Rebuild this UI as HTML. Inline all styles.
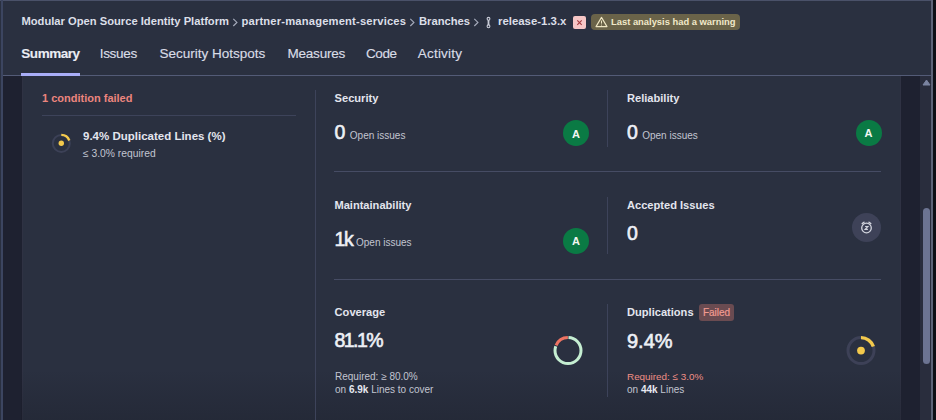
<!DOCTYPE html>
<html><head><meta charset="utf-8">
<style>
html,body{margin:0;padding:0;}
body{width:936px;height:420px;overflow:hidden;position:relative;background:#2a3040;font-family:"Liberation Sans",sans-serif;}
.a{position:absolute;white-space:nowrap;}
.t{position:absolute;white-space:nowrap;line-height:1;}
.bc{color:#dcdfe8;font-weight:700;font-size:11.2px;}
.chev{color:#a8adbd;font-size:12px;}
.tab{color:#d9dce6;font-size:13.5px;-webkit-text-stroke:0.15px #d9dce6;}
.ttl{color:#e3e5ee;font-weight:700;font-size:11.1px;}
.val{color:#eef0f6;font-size:19.5px;-webkit-text-stroke:0.6px #eef0f6;}
.sub{color:#c2c5d1;font-size:10px;}
.hl{background:#454b63;}
</style></head><body>
<!-- frame -->
<div class="a" style="left:0;top:0;width:936px;height:1px;background:#4a5169"></div>
<div class="a" style="left:1px;top:0;width:2px;height:420px;background:#3c4560"></div>
<div class="a" style="left:931px;top:0;width:2px;height:420px;background:#5d6478"></div>
<div class="a" style="left:933px;top:0;width:3px;height:420px;background:#0e1016"></div>

<!-- breadcrumb -->
<div class="t bc" style="left:21.4px;top:16px;">Modular Open Source Identity Platform</div>
<svg class="a" style="left:232.3px;top:17px" width="7" height="11" viewBox="0 0 7 11"><path d="M1.3 1.8L4.9 5.4L1.3 9" fill="none" stroke="#a4a9b9" stroke-width="1.2"/></svg>
<div class="t bc" style="left:241.5px;top:16px;letter-spacing:0.18px;">partner-management-services</div>
<svg class="a" style="left:409.3px;top:17px" width="7" height="11" viewBox="0 0 7 11"><path d="M1.3 1.8L4.9 5.4L1.3 9" fill="none" stroke="#a4a9b9" stroke-width="1.2"/></svg>
<div class="t bc" style="left:419px;top:16px;">Branches</div>
<svg class="a" style="left:472.8px;top:17px" width="7" height="11" viewBox="0 0 7 11"><path d="M1.3 1.8L4.9 5.4L1.3 9" fill="none" stroke="#a4a9b9" stroke-width="1.2"/></svg>
<svg class="a" style="left:484px;top:16px" width="9" height="13" viewBox="0 0 9 13">
  <circle cx="4.5" cy="2.8" r="1.4" fill="none" stroke="#c9ccd8" stroke-width="1.1"/>
  <circle cx="4.5" cy="10.3" r="1.4" fill="none" stroke="#c9ccd8" stroke-width="1.1"/>
  <line x1="4.5" y1="4.1" x2="4.5" y2="9" stroke="#c9ccd8" stroke-width="1.8"/>
</svg>
<div class="t bc" style="left:498px;top:16px;font-size:11.4px;">release-1.3.x</div>
<div class="a" style="left:573px;top:16px;width:13px;height:13px;background:#f6c6c6;border-radius:2px;"></div>
<svg class="a" style="left:573px;top:16px" width="13" height="13" viewBox="0 0 13 13"><path d="M4.3 4.4L8.7 8.8M8.7 4.4L4.3 8.8" stroke="#a33a3e" stroke-width="1.1"/></svg>
<div class="a" style="left:591px;top:13.5px;width:149px;height:16.8px;background:#6a6349;border-radius:4px;"></div>
<svg class="a" style="left:595px;top:16px" width="13" height="12" viewBox="0 0 13 12"><path d="M6.5 1.4L12 10.6H1Z" fill="none" stroke="#efe6c4" stroke-width="1.1" stroke-linejoin="round"/><path d="M6.5 4.6V7.6" stroke="#efe6c4" stroke-width="1"/><circle cx="6.5" cy="9" r="0.55" fill="#efe6c4"/></svg>
<div class="t" style="left:611px;top:17.3px;color:#f1e9c9;font-weight:700;font-size:9.4px;">Last analysis had a warning</div>

<!-- tabs -->
<div class="t tab" style="left:21.3px;top:47.1px;font-weight:700;color:#eceef4;letter-spacing:-0.45px;">Summary</div>
<div class="t tab" style="left:99.7px;top:47.1px;letter-spacing:-0.3px;">Issues</div>
<div class="t tab" style="left:159.4px;top:47.1px;">Security Hotspots</div>
<div class="t tab" style="left:287.5px;top:47.1px;letter-spacing:-0.22px;">Measures</div>
<div class="t tab" style="left:365.9px;top:47.1px;letter-spacing:-0.35px;">Code</div>
<div class="t tab" style="left:417.8px;top:47.1px;letter-spacing:0.2px;">Activity</div>
<div class="a" style="left:3px;top:75px;width:928px;height:1px;background:#535b77"></div>
<div class="a" style="left:21px;top:73.4px;width:59px;height:2.6px;background:#a9aef8"></div>

<!-- side strips -->
<div class="a" style="left:3px;top:76px;width:19px;height:344px;background:#1e2130"></div><div class="a" style="left:22px;top:76px;width:1px;height:344px;background:#2f3243"></div>
<div class="a" style="left:900px;top:76px;width:1px;height:344px;background:#2f3243"></div><div class="a" style="left:901px;top:76px;width:19px;height:344px;background:#1e2130"></div>
<div class="a" style="left:920px;top:76px;width:11px;height:344px;background:#292d3d"></div>
<svg class="a" style="left:922px;top:79px" width="9" height="7" viewBox="0 0 9 7"><path d="M4.5 1L8 6H1Z" fill="#7b84a1" stroke="#7b84a1" stroke-width="1" stroke-linejoin="round"/></svg>
<div class="a" style="left:923px;top:208px;width:7px;height:156px;background:#6c7492;border-radius:3.5px;"></div>
<!-- bottom fade -->
<div class="a" style="left:21px;top:370px;width:880px;height:50px;background:linear-gradient(to bottom,rgba(20,22,32,0),rgba(20,22,32,0.25));"></div>

<!-- left panel -->
<div class="t" style="left:42px;top:92.7px;color:#ec857e;font-weight:700;font-size:11px;">1 condition failed</div>
<div class="a" style="left:42px;top:115px;width:254px;height:1px;background:#3d435a"></div>
<svg class="a" style="left:50px;top:132px" width="23" height="23" viewBox="0 0 23 23">
  <circle cx="11.3" cy="11.4" r="8.5" fill="none" stroke="#3c4157" stroke-width="2"/>
  <path d="M11.3 2.9A8.5 8.5 0 0 1 19.29 8.49" fill="none" stroke="#f3c94c" stroke-width="2.4"/>
  <circle cx="11.3" cy="11.3" r="2.7" fill="#f3c94c"/>
</svg>
<div class="t" style="left:83px;top:130.8px;color:#e3e5ee;font-weight:700;font-size:11.5px;">9.4% Duplicated Lines (%)</div>
<div class="t" style="left:83px;top:149px;color:#c2c5d1;font-size:10.3px;">≤ 3.0% required</div>

<div class="a" style="left:315px;top:90px;width:1px;height:330px;background:#3d435a"></div>

<!-- Security -->
<div class="t ttl" style="left:334.6px;top:92.7px;">Security</div>
<div class="t val" style="left:334.6px;top:122.7px;">0</div>
<div class="t sub" style="left:349.8px;top:131.2px;">Open issues</div>
<div class="a" style="left:563px;top:120px;width:26px;height:26px;border-radius:50%;background:#0a7a44;"></div>
<div class="t" style="left:563px;top:128.5px;width:26px;text-align:center;color:#f2f6f2;font-weight:700;font-size:11px;">A</div>
<div class="a" style="left:607px;top:90px;width:1px;height:57px;background:#3d435a"></div>

<!-- Reliability -->
<div class="t ttl" style="left:627px;top:92.9px;">Reliability</div>
<div class="t val" style="left:627px;top:122.7px;">0</div>
<div class="t sub" style="left:642.2px;top:131.2px;">Open issues</div>
<div class="a" style="left:855.5px;top:119.5px;width:26px;height:26px;border-radius:50%;background:#0a7a44;"></div>
<div class="t" style="left:855.5px;top:128px;width:26px;text-align:center;color:#f2f6f2;font-weight:700;font-size:11px;">A</div>

<div class="a" style="left:334px;top:171px;width:547px;height:1px;background:#464c64"></div>

<!-- Maintainability -->
<div class="t ttl" style="left:334.4px;top:199.9px;">Maintainability</div>
<div class="t val" style="left:334.6px;top:229.7px;letter-spacing:-1.4px;">1k</div>
<div class="t sub" style="left:356px;top:238.4px;">Open issues</div>
<div class="a" style="left:563px;top:227.5px;width:26px;height:26px;border-radius:50%;background:#0a7a44;"></div>
<div class="t" style="left:563px;top:236px;width:26px;text-align:center;color:#f2f6f2;font-weight:700;font-size:11px;">A</div>
<div class="a" style="left:607px;top:197px;width:1px;height:57px;background:#3d435a"></div>

<!-- Accepted -->
<div class="t ttl" style="left:627px;top:200.0px;">Accepted Issues</div>
<div class="t val" style="left:627px;top:223.9px;">0</div>
<div class="a" style="left:852px;top:213px;width:29px;height:29px;border-radius:50%;background:#3e4258;"></div>
<svg class="a" style="left:858px;top:219px" width="17" height="17" viewBox="0 0 17 17">
  <circle cx="8.5" cy="9" r="4.8" fill="none" stroke="#d2d4de" stroke-width="1.3"/>
  <path d="M4.2 4.6L6 3.2M12.8 4.6L11 3.2" stroke="#d2d4de" stroke-width="1.4" stroke-linecap="round"/>
  <path d="M7.1 7.5H9.9L7.1 10.4H9.9" fill="none" stroke="#d2d4de" stroke-width="1.15"/>
</svg>

<div class="a" style="left:334px;top:279px;width:547px;height:1px;background:#464c64"></div>

<!-- Coverage -->
<div class="t ttl" style="left:334.6px;top:307.0px;">Coverage</div>
<div class="t val" style="left:334.6px;top:330.6px;letter-spacing:-1.6px;">81.1%</div>
<div class="t sub" style="left:335px;top:372.2px;">Required: ≥ 80.0%</div>
<div class="t sub" style="left:335px;top:384.8px;">on <b style="color:#e6e8f0">6.9k</b> Lines to cover</div>
<svg class="a" style="left:552px;top:335px" width="32" height="32" viewBox="0 0 32 32">
  <circle cx="16" cy="15.6" r="13" fill="none" stroke="#c5eed2" stroke-width="3" stroke-dasharray="64.8 16.9" stroke-dashoffset="-0.5" transform="rotate(-90 16 15.6)"/>
  <circle cx="16" cy="15.6" r="13" fill="none" stroke="#ee7362" stroke-width="3" stroke-dasharray="14.8 66.88" stroke-dashoffset="-66.2" transform="rotate(-90 16 15.6)"/>
</svg>
<div class="a" style="left:607px;top:304px;width:1px;height:93px;background:#3d435a"></div>

<!-- Duplications -->
<div class="t ttl" style="left:627px;top:307.2px;">Duplications</div>
<div class="a" style="left:699px;top:304px;width:35px;height:17px;border-radius:3px;background:#6a4b51;"></div>
<div class="t" style="left:699px;top:307.6px;width:35px;text-align:center;color:#f29a90;font-size:10px;-webkit-text-stroke:0.2px #f29a90;">Failed</div>
<div class="t val" style="left:627px;top:330.5px;font-size:20px;">9.4%</div>
<div class="t sub" style="left:627px;top:372.3px;color:#ef8e85;font-size:9.9px;">Required: ≤ 3.0%</div>
<div class="t sub" style="left:627px;top:384.8px;">on <b style="color:#e6e8f0">44k</b> Lines</div>
<svg class="a" style="left:845px;top:335px" width="32" height="32" viewBox="0 0 32 32">
  <circle cx="16" cy="15.6" r="13" fill="none" stroke="#3d4157" stroke-width="3"/>
  <path d="M16 2.6A13 13 0 0 1 28.36 11.58" fill="none" stroke="#f3c94c" stroke-width="3.4"/>
  <circle cx="16" cy="15.6" r="3.9" fill="#f3c94c"/>
</svg>
</body></html>
